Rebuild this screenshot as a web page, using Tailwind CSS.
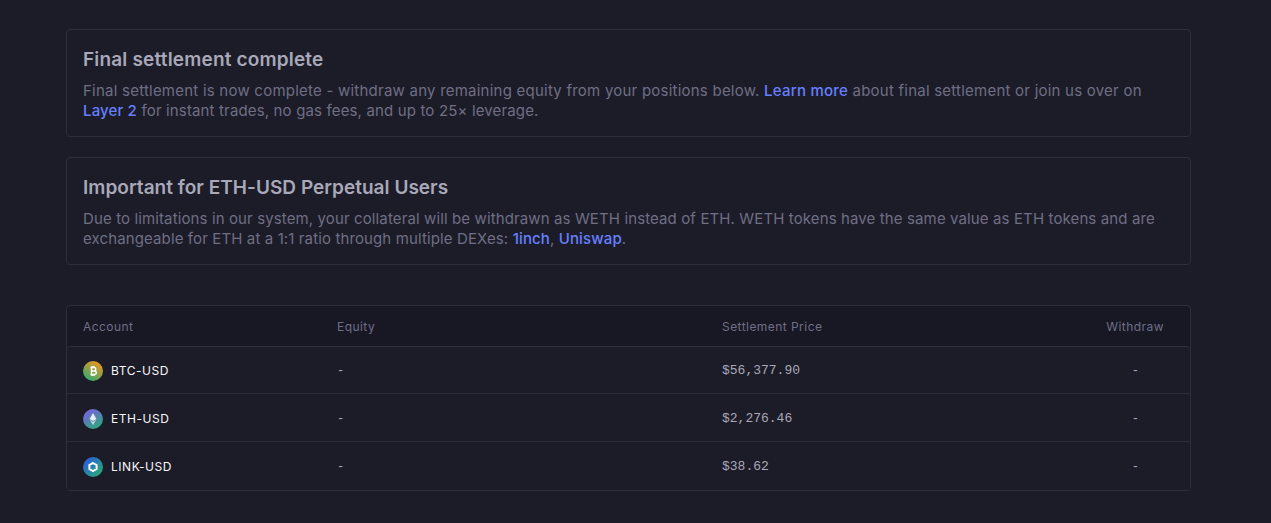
<!DOCTYPE html>
<html lang="en">
<head>
    <meta charset="UTF-8">
    <title>Final settlement</title>
    <script src="https://cdn.jsdelivr.net/npm/@tailwindcss/browser@4"></script>
</head>
<body class="bg-[#1c1c28] font-['Inter',sans-serif] h-[523px] overflow-hidden">

<div class="w-[1125px] ml-[66px] pt-[29px]">
    <div class="border border-[#2d2d3d] rounded-[4px] h-[108px] px-4 pt-[18px]">
        <h2 class="text-[#a8a8b8] text-[19px] leading-6 font-semibold tracking-[0.17px]">Final settlement complete</h2>
        <p class="text-[#6f6e84] text-[15px] leading-5 tracking-[0.23px] mt-[9px]">Final settlement is now complete - withdraw any remaining equity from your positions below. <a class="text-[#6680ff] font-medium">Learn more</a> about final settlement or join us over on <a class="text-[#6680ff] font-medium tracking-[0.15px]">Layer 2</a> <span class="tracking-[0.15px]">for instant trades, no gas fees, and up to 25× leverage.</span></p>
    </div>

    <div class="border border-[#2d2d3d] rounded-[4px] h-[108px] px-4 pt-[18px] mt-[20px]">
        <h2 class="text-[#a8a8b8] text-[19px] leading-6 font-semibold tracking-[0.03px]">Important for ETH-USD Perpetual Users</h2>
        <p class="text-[#6f6e84] text-[15px] leading-5 tracking-[0.12px] mt-[9px]">Due to limitations in our system, your collateral will be withdrawn as WETH instead of ETH. WETH tokens have the same value as ETH tokens and are exchangeable for ETH at a 1:1 ratio through multiple DEXes: <a class="text-[#6680ff] font-medium">1inch</a>, <a class="text-[#6680ff] font-medium">Uniswap</a>.</p>
    </div>

    <div class="border border-[#2d2d3d] rounded-[4px] mt-[40px] bg-[#181825] overflow-hidden">
        <div class="grid grid-cols-[254px_385px_1fr_100px] h-[40px] pt-[2px] items-center text-[12px] tracking-[0.45px] text-[#6f6e84] pl-4">
            <span>Account</span>
            <span>Equity</span>
            <span>Settlement Price</span>
            <span class="text-right pr-[26px]">Withdraw</span>
        </div>
        <div class="bg-[#1c1c28] border-t border-[#2d2d3d] rounded-t-[4px]">
            <div class="grid grid-cols-[254px_385px_1fr_100px] h-[46px] pt-[2px] items-center pl-4 text-[12px]">
                <span class="flex items-center gap-2 text-[#f7f7f7] tracking-[0.55px]">
                    <svg width="20" height="20" viewBox="0 0 20 20">
                        <defs><linearGradient id="btc" x1="0.8" y1="0" x2="0.2" y2="1"><stop offset="0" stop-color="#f7931a"/><stop offset="1" stop-color="#27ad75"/></linearGradient></defs>
                        <circle cx="10" cy="10" r="10" fill="url(#btc)"/>
                        <path d="M7.5 6.5h3.5a1.7 1.7 0 0 1 0 3.5H8.5h3a1.8 1.8 0 0 1 0 3.6H7.5M8.5 6.5v7M9 5v1.5M11 5v1.5M9 13.5V15M11 13.5V15" fill="none" stroke="#fff" stroke-width="1.5"/>
                    </svg>
                    BTC-USD
                </span>
                <span class="text-[#a8a8b8] font-['Liberation_Mono',monospace]">-</span>
                <span class="text-[#a8a8b8] font-['Liberation_Mono',monospace] text-[13px]">$56,377.90</span>
                <span class="text-[#a8a8b8] text-right pr-[51px] font-['Liberation_Mono',monospace]">-</span>
            </div>
            <div class="grid grid-cols-[254px_385px_1fr_100px] h-[48px] pt-[2px] items-center pl-4 text-[12px] border-t border-[#2d2d3d]">
                <span class="flex items-center gap-2 text-[#f7f7f7] tracking-[0.55px]">
                    <svg width="20" height="20" viewBox="0 0 20 20">
                        <defs><linearGradient id="eth" x1="0.2" y1="0" x2="0.8" y2="1"><stop offset="0" stop-color="#7d5be6"/><stop offset="1" stop-color="#27ad75"/></linearGradient></defs>
                        <circle cx="10" cy="10" r="10" fill="url(#eth)"/>
                        <path d="M10 4l3.5 6L10 12 6.5 10z" fill="#fff" opacity=".85"/>
                        <path d="M10 13l3.2-2.2L10 16l-3.2-5.2z" fill="#fff" opacity=".7"/>
                    </svg>
                    ETH-USD
                </span>
                <span class="text-[#a8a8b8] font-['Liberation_Mono',monospace]">-</span>
                <span class="text-[#a8a8b8] font-['Liberation_Mono',monospace] text-[13px]">$2,276.46</span>
                <span class="text-[#a8a8b8] text-right pr-[51px] font-['Liberation_Mono',monospace]">-</span>
            </div>
            <div class="grid grid-cols-[254px_385px_1fr_100px] h-[49px] pt-[2px] items-center pl-4 text-[12px] border-t border-[#2d2d3d]">
                <span class="flex items-center gap-2 text-[#f7f7f7] tracking-[0.55px]">
                    <svg width="20" height="20" viewBox="0 0 20 20">
                        <defs><linearGradient id="link" x1="0.1" y1="0.1" x2="0.9" y2="0.9"><stop offset="0" stop-color="#2a5ada"/><stop offset="1" stop-color="#27ad75"/></linearGradient></defs>
                        <circle cx="10" cy="10" r="10" fill="url(#link)"/>
                        <path d="M10 6l3.6 2v4L10 14l-3.6-2V8z" fill="none" stroke="#fff" stroke-width="2"/>
                    </svg>
                    LINK-USD
                </span>
                <span class="text-[#a8a8b8] font-['Liberation_Mono',monospace]">-</span>
                <span class="text-[#a8a8b8] font-['Liberation_Mono',monospace] text-[13px]">$38.62</span>
                <span class="text-[#a8a8b8] text-right pr-[51px] font-['Liberation_Mono',monospace]">-</span>
            </div>
        </div>
    </div>
</div>

</body>
</html>
